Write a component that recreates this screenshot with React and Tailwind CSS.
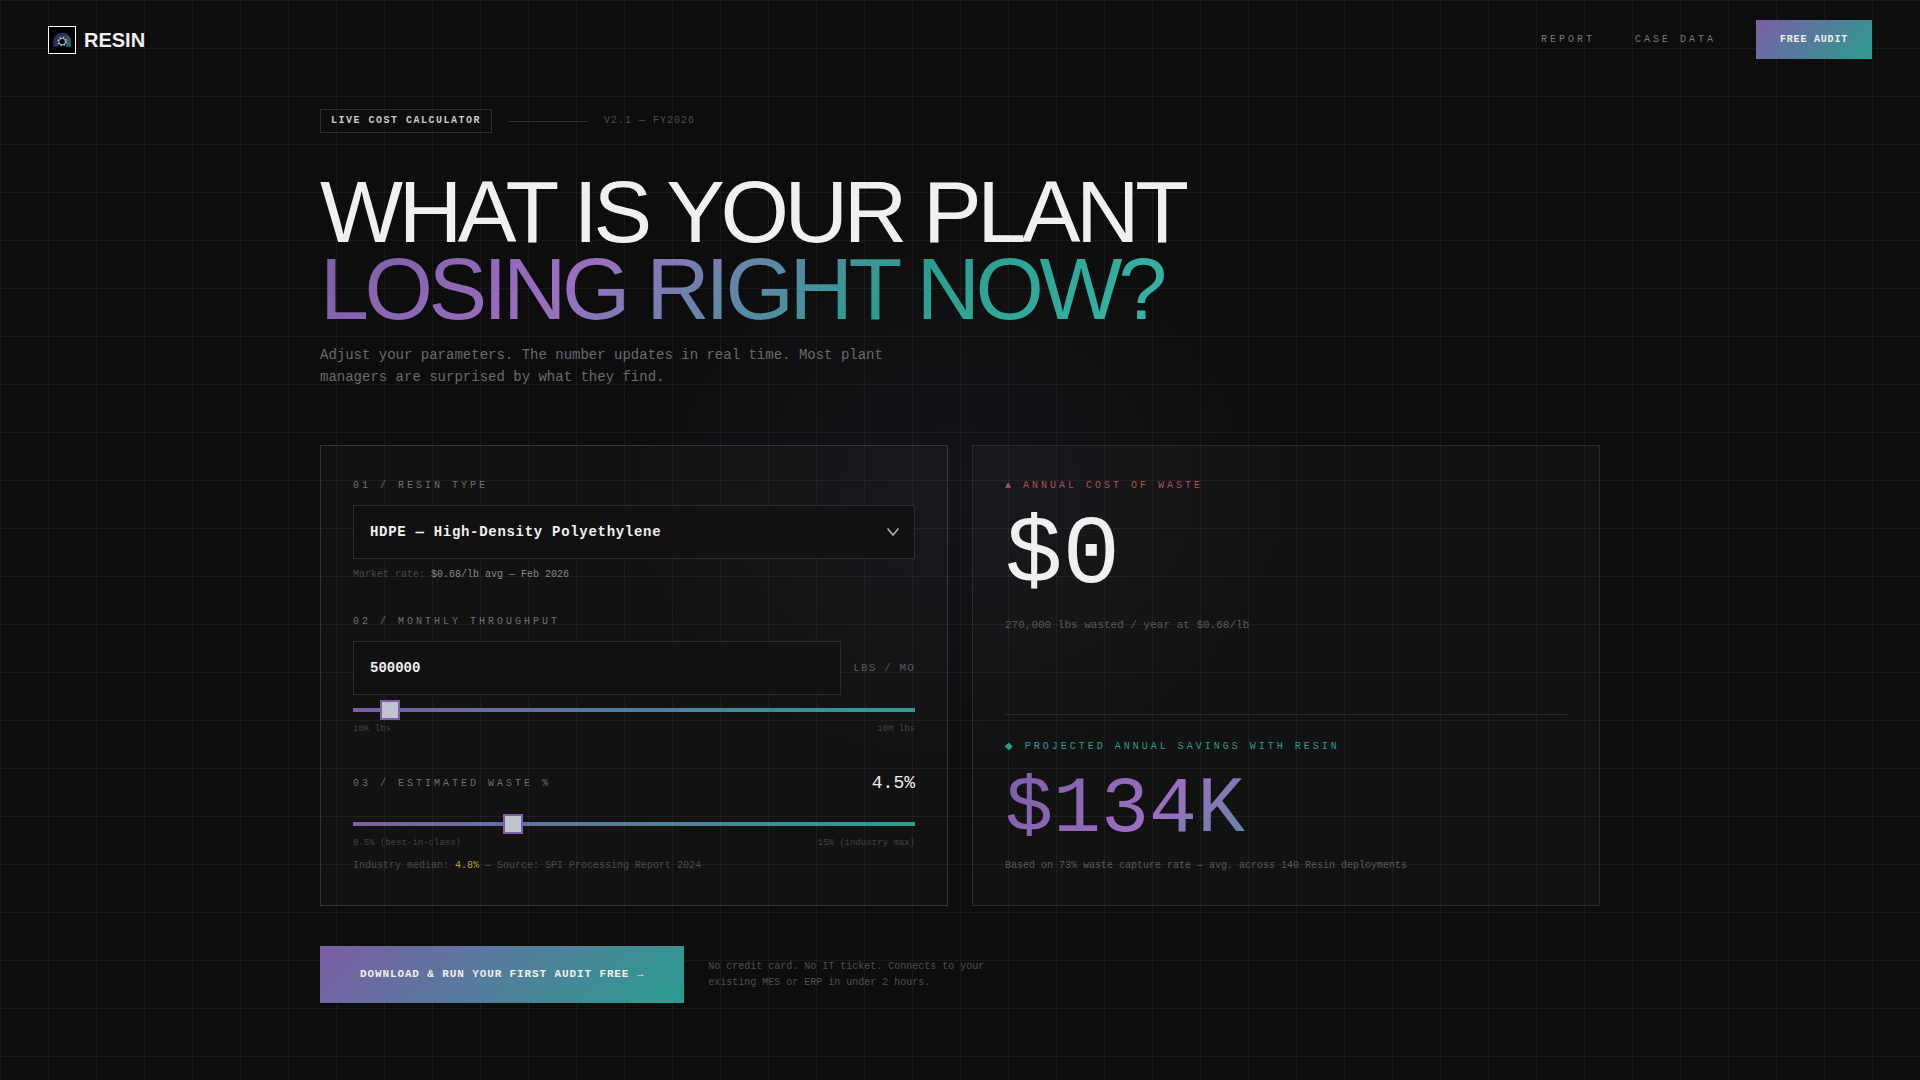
import React, { useState } from "react";

const Logo = () => (
  <svg viewBox="0 0 26 26" className="h-7 w-7 border border-white bg-black" aria-hidden="true">
    <defs>
      <linearGradient id="arch" x1="0" y1="0" x2="1" y2="0.6">
        <stop offset="0" stopColor="#2f2150" />
        <stop offset="0.5" stopColor="#2c3566" />
        <stop offset="1" stopColor="#17706f" />
      </linearGradient>
    </defs>
    <path
      d="M4.300 19.800V14a8.800 8.200 0 0 1 17.600 0v5.800h-4.800V14.500a4 4 0 0 0-8 0v5.300z"
      fill="url(#arch)"
    />
    <circle cx="13.200" cy="14.500" r="4.400" fill="#000" />
    <circle cx="13.200" cy="14.500" r="3.200" fill="none" stroke="#8f949c" strokeWidth="1.200" />
    <circle
      cx="13.200"
      cy="14.500"
      r="4"
      fill="none"
      stroke="#c5c7ca"
      strokeWidth="1.500"
      strokeDasharray="1.600 1.542"
    />
  </svg>
);

const FieldLabel = ({ htmlFor, children }) => (
  <label htmlFor={htmlFor} className="block text-[10px] leading-[15px] tracking-[0.3em] text-[#707070] uppercase">
    {children}
  </label>
);

const Slider = ({ label, ...props }) => (
  <input
    type="range"
    aria-label={label}
    className="block h-5 w-full cursor-pointer appearance-none bg-transparent [&::-webkit-slider-runnable-track]:h-1 [&::-webkit-slider-runnable-track]:bg-[linear-gradient(90deg,#7b5ea7,#2a9d8f)] [&::-webkit-slider-thumb]:-mt-2 [&::-webkit-slider-thumb]:h-5 [&::-webkit-slider-thumb]:w-5 [&::-webkit-slider-thumb]:appearance-none [&::-webkit-slider-thumb]:border-2 [&::-webkit-slider-thumb]:border-[#7b5ea7] [&::-webkit-slider-thumb]:bg-[#c0c4d0]"
    {...props}
  />
);

const Scale = ({ from, to }) => (
  <div className="mt-1 flex justify-between text-[9px] leading-[10px] text-[#444]">
    <span>{from}</span>
    <span>{to}</span>
  </div>
);

const Header = () => (
  <header className="flex items-center justify-between px-12 py-5">
    <a href="#" className="flex items-center gap-2">
      <Logo />
      <span className="font-['Liberation_Sans',sans-serif] text-xl font-bold text-[#f0f0f0]">RESIN</span>
    </a>
    <nav className="flex items-center gap-10 text-[10px] leading-[11px]">
      <a href="#report" className="tracking-[0.3em] text-[#777]">REPORT</a>
      <a href="#cases" className="tracking-[0.3em] text-[#777]">CASE DATA</a>
      <a
        href="#audit"
        className="bg-[linear-gradient(135deg,#7b5ea7,#2a9d8f)] px-6 py-[14px] font-bold tracking-[0.08em] text-[#f0f0f0]"
      >
        FREE AUDIT
      </a>
    </nav>
  </header>
);

const Inputs = () => {
  const [resin, setResin] = useState("HDPE — High-Density Polyethylene");
  const [lbs, setLbs] = useState(500000);
  const [waste, setWaste] = useState(4.5);

  return (
    <section className="border border-[#373541] bg-white/[0.024] p-8">
      <FieldLabel htmlFor="resin">01 / Resin Type</FieldLabel>
      <div className="relative mt-3">
        <select
          id="resin"
          value={resin}
          onChange={(e) => setResin(e.target.value)}
          className="h-[54px] w-full appearance-none border border-[#2c2c2c] bg-[#111] px-4 text-sm font-bold tracking-[0.05em] text-[#f0f0f0]"
        >
          <option>HDPE — High-Density Polyethylene</option>
          <option>LDPE — Low-Density Polyethylene</option>
          <option>PP — Polypropylene</option>
        </select>
        <svg
          viewBox="0 0 14 10"
          className="pointer-events-none absolute top-[22px] right-[15px] h-[10px] w-[14px]"
          fill="none"
          stroke="#b4b4b8"
          strokeWidth="1.500"
          aria-hidden="true"
        >
          <path d="M1.500 1.500l5.500 6.500 5.500-6.500" />
        </svg>
      </div>
      <p className="mt-2 text-[10px] leading-[15px] text-[#484848]">
        Market rate: <span className="text-[#888]">$0.68/lb avg — Feb 2026</span>
      </p>

      <div className="mt-8">
        <FieldLabel htmlFor="lbs">02 / Monthly Throughput</FieldLabel>
      </div>
      <div className="mt-3 flex items-center gap-3">
        <input
          id="lbs"
          type="text"
          value={lbs}
          onChange={(e) => setLbs(e.target.value)}
          className="h-[54px] min-w-0 flex-1 border border-[#2c2c2c] bg-[#111] px-4 text-sm font-bold text-[#f0f0f0]"
        />
        <span className="text-[11px] tracking-[0.1em] text-[#5a5a5a]">LBS / MO</span>
      </div>
      <div className="mt-[5px]">
        <Slider
          label="Monthly throughput"
          min={10000}
          max={10000000}
          step={10000}
          value={lbs}
          onChange={(e) => setLbs(e.target.value)}
        />
      </div>
      <Scale from="10K lbs" to="10M lbs" />

      <div className="mt-[39px] flex items-center justify-between">
        <FieldLabel htmlFor="waste">03 / Estimated Waste %</FieldLabel>
        <span className="text-lg leading-5 text-[#f0f0f0]">{waste}%</span>
      </div>
      <div className="mt-[21px]">
        <Slider
          id="waste"
          label="Estimated waste"
          min={0.5}
          max={15}
          step={0.1}
          value={waste}
          onChange={(e) => setWaste(e.target.value)}
        />
      </div>
      <Scale from="0.5% (best-in-class)" to="15% (industry max)" />
      <p className="mt-[10px] text-[10px] leading-[15px] text-[#4c4c4c]">
        Industry median: <span className="text-[#b8a020]">4.8%</span> — Source: SPI Processing Report 2024
      </p>
    </section>
  );
};

const Results = () => (
  <section className="flex flex-col justify-between border border-[#2c2c2e] bg-white/[0.024] p-8">
    <div>
      <h2 className="text-[10px] leading-[15px] tracking-[0.3em] text-[#b05058]">▲ ANNUAL COST OF WASTE</h2>
      <p className="mt-4 text-8xl leading-[96px] text-[#f0f0f0]">$0</p>
      <p className="mt-3 text-[11px] leading-4 text-[#5a5a5a]">270,000 lbs wasted / year at $0.68/lb</p>
    </div>
    <div className="border-t border-[#2c2c2c] pt-[23px]">
      <h2 className="text-[10px] leading-[15px] tracking-[0.3em] text-[#2a9d8f]">
        <span className="font-['DejaVu_Sans',sans-serif]">◆</span> PROJECTED ANNUAL SAVINGS WITH RESIN
      </h2>
      <p className="mt-4 bg-[linear-gradient(135deg,#7b5ea7_0%,#9b6fc0_30%,#2a9d8f_66%,#38b8a8_100%)] bg-clip-text text-[80px] leading-20 text-transparent">
        $134K
      </p>
      <p className="mt-2 text-[10px] leading-[15px] text-[#5a5a5a]">
        Based on 73% waste capture rate — avg. across 140 Resin deployments
      </p>
    </div>
  </section>
);

const App = () => (
  <div className="min-h-screen bg-[#0d0d0d] bg-[radial-gradient(ellipse_360px_300px_at_50%_45%,rgba(123,94,167,0.07),transparent),linear-gradient(rgba(255,255,255,0.05)_1px,transparent_1px),linear-gradient(90deg,rgba(255,255,255,0.05)_1px,transparent_1px)] bg-size-[100%_100%,48px_48px,48px_48px] font-['Liberation_Mono',monospace]">
    <Header />
    <main className="mx-auto max-w-7xl pt-[30px] pb-[76px]">
      <div className="flex items-center gap-4 text-[10px] leading-[14px]">
        <span className="border border-[#2e2e2e] px-[10px] py-1 font-bold tracking-[0.15em] text-[#c8c8d0]">
          LIVE COST CALCULATOR
        </span>
        <span className="h-px w-20 bg-[#2e2e2e]" />
        <span className="tracking-[0.1em] leading-4 text-[#505050]">V2.1 — FY2026</span>
      </div>

      <h1 className="mt-10 w-fit font-['Liberation_Sans',sans-serif] text-[88px] leading-[77px] tracking-[-0.05em] text-[#f0f0f0]">
        WHAT IS YOUR PLANT
        <span className="block bg-[linear-gradient(135deg,#7b5ea7_0%,#9b6fc0_30%,#2a9d8f_66%,#38b8a8_100%)] bg-clip-text text-transparent">
          LOSING RIGHT NOW?
        </span>
      </h1>
      <p className="mt-[17px] max-w-[580px] text-sm leading-[22px] text-[#6a6a6a]">
        Adjust your parameters. The number updates in real time. Most plant managers are surprised by what they find.
      </p>

      <div className="mt-[57px] grid grid-cols-2 gap-6">
        <Inputs />
        <Results />
      </div>

      <div className="mt-10 flex items-center gap-6">
        <button
          type="button"
          className="bg-[linear-gradient(135deg,#7b5ea7,#2a9d8f)] px-10 py-[22px] text-[11px] leading-[13px] font-bold tracking-[0.08em] text-[#f0f0f0]"
        >
          DOWNLOAD &amp; RUN YOUR FIRST AUDIT FREE →
        </button>
        <p className="max-w-[280px] text-[10px] leading-4 text-[#505050]">
          No credit card. No IT ticket. Connects to your existing MES or ERP in under 2 hours.
        </p>
      </div>
    </main>
  </div>
);

export default App;
